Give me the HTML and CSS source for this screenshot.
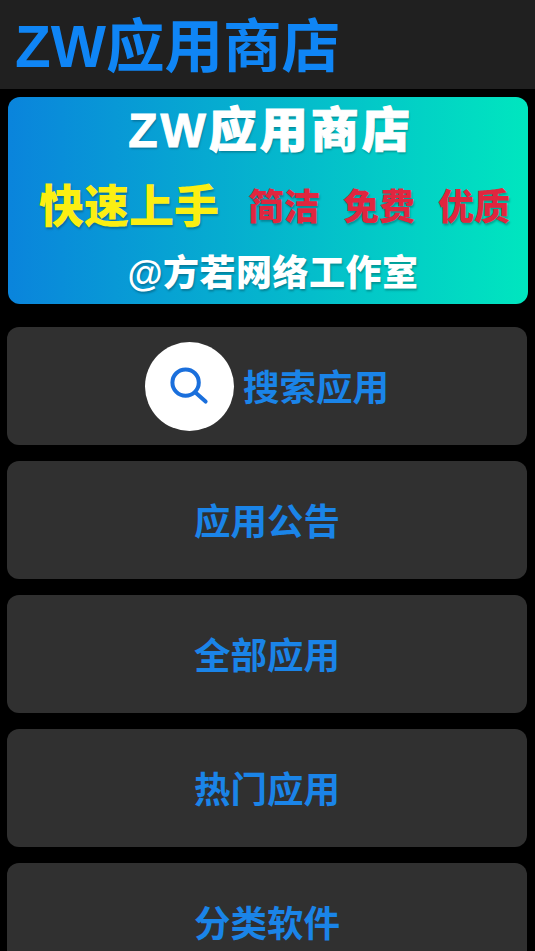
FILE: index.html
```html
<!DOCTYPE html>
<html lang="zh-CN">
  <head>
    <meta charset="UTF-8" />
    <meta name="viewport" content="width=device-width, initial-scale=1.0" />
    <title>ZW应用商店</title>
    <link rel="stylesheet" href="styles.css">
  </head>

  <body>
    <div class="header">ZW应用商店</div>
    <div class="banner">
      <div class="banner-title">ZW应用商店</div>
      <div class="banner-row">
        <span class="quick">快速上手</span>
        <span class="tag">简洁</span>
        <span class="tag">免费</span>
        <span class="tag">优质</span>
      </div>
      <div class="banner-foot">@方若网络工作室</div>
    </div>
    <ul class="menu">
      <li>
        <span class="search-icon">
          <svg width="44" height="44" viewBox="0 0 44 44" fill="none" stroke="#1a6fdc" stroke-width="4" stroke-linecap="round">
            <circle cx="17.6" cy="18.6" r="13.2" />
            <path d="M28 29l9.6 8.6" />
          </svg>
        </span>
        搜索应用
      </li>
      <li>应用公告</li>
      <li>全部应用</li>
      <li>热门应用</li>
      <li>分类软件</li>
    </ul>
  </body>
</html>
```

FILE: styles.css
```css
html,
body {
  height: 100%;
  overflow: hidden;
}

body,
ul {
  margin: 0;
}

ul {
  padding-left: 0;
  list-style: none;
}

body {
  background-color: #000;
  font-family: "Liberation Sans", "Noto Sans CJK SC", sans-serif;
}

.header {
  height: 89px;
  padding-left: 15px;
  background-color: #202020;
  color: #0f85f5;
  font-size: 58.5px;
  font-weight: 700;
  line-height: 93px;
}

.banner {
  display: flex;
  flex-direction: column;
  align-items: center;
  width: 520px;
  height: 207px;
  margin: 8px 0 0 8px;
  border-radius: 12px;
  background: linear-gradient(90deg, #0a84dc, #00e6bf);
  color: #fff;
  font-weight: 900;
  text-shadow: 1px 2px 2px rgba(0, 0, 0, 0.25);
}

.banner-title {
  margin-top: 4px;
  padding-left: 5px;
  font-size: 48px;
  letter-spacing: 3px;
  line-height: 60px;
  -webkit-text-stroke: 1px #fff;
}

.banner-row {
  display: flex;
  align-items: center;
  gap: 23px;
  height: 85px;
  padding-left: 13px;
}

.quick {
  margin-right: 6px;
  color: #fbef12;
  font-size: 45px;
}

.tag {
  color: #e0263f;
  font-size: 36px;
}

.banner-foot {
  margin-top: 3px;
  padding-left: 10px;
  font-size: 36px;
  letter-spacing: 0.5px;
  line-height: 50px;
}

.menu {
  display: flex;
  flex-direction: column;
  gap: 16px;
  width: 520px;
  margin: 23px 0 0 7px;
}

.menu > li {
  display: flex;
  flex: none;
  align-items: center;
  justify-content: center;
  gap: 9px;
  height: 118px;
  padding-bottom: 2px;
  box-sizing: border-box;
  border-radius: 12px;
  background-color: #303030;
  color: #1a84e8;
  font-size: 36.5px;
  font-weight: 700;
}

.search-icon {
  display: flex;
  align-items: center;
  justify-content: center;
  width: 89px;
  height: 89px;
  margin-top: 2px;
  border-radius: 50%;
  background-color: #fff;
}
```
